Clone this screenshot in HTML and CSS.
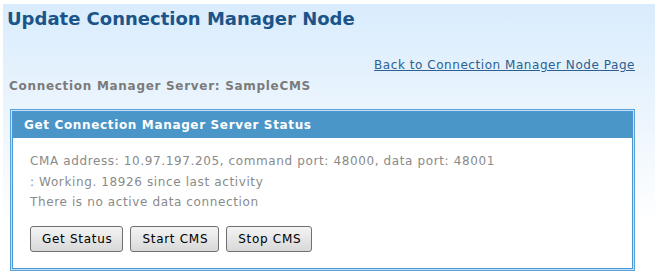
FILE: index.html
```html
<!DOCTYPE html>
<html lang="en">
<head>
  <meta charset="UTF-8">
  <title>Update Connection Manager Node</title>
  <link rel="stylesheet" href="styles.css">
</head>
<body>
  <div class="page">
    <h1 class="title">Update Connection Manager Node</h1>
    <div class="back-row">
      <a href="#" class="back-link">Back to Connection Manager Node Page</a>
    </div>
    <div class="server-name">Connection Manager Server: SampleCMS</div>
    <div class="group">
      <div class="group-inner">
        <div class="group-head">Get Connection Manager Server Status</div>
        <div class="group-body">
          <div class="status-line">CMA address: 10.97.197.205, command port: 48000, data port: 48001</div>
          <div class="status-line">: Working. 18926 since last activity</div>
          <div class="status-line">There is no active data connection</div>
          <div class="actions">
            <button>Get Status</button>
            <button>Start CMS</button>
            <button>Stop CMS</button>
          </div>
        </div>
      </div>
    </div>
  </div>
</body>
</html>
```
FILE: styles.css
```css
body { margin: 0; padding: 4px 5px 0 3px; background: #fff; font-family: "DejaVu Sans", Verdana, sans-serif; }
.page { height: 274px; padding: 0 20px 0 4px; background: linear-gradient(#d9ecfd, #eef6fd 45%, #ffffff 80%); }
.title { margin: 0; padding-top: 3px; font-size: 18px; line-height: 24px; font-weight: bold; color: #1b5488; }
.back-row { text-align: right; margin-top: 26px; font-size: 12px; line-height: 16px; letter-spacing: 0.55px; }
.back-link { color: #2b5f91; text-decoration: underline; }
.server-name { margin-top: 5px; padding-left: 2px; font-size: 12px; line-height: 16px; font-weight: bold; color: #7b7b7b; letter-spacing: 0.7px; }
.group { margin: 15px 0 0 3px; border: 1px solid #5aa2da; padding: 1px; background: #c6e0f5; }
.group-inner { border: 1px solid #4a98d6; background: #fff; }
.group-head { background: #4a96c8; color: #fff; font-weight: bold; font-size: 12px; line-height: 26px; padding-left: 11px; letter-spacing: 0.65px; }
.group-body { padding: 13px 16px 16px 17px; }
.status-line { color: #8a8a8a; font-size: 12px; line-height: 20.5px; letter-spacing: 0.62px; }
.actions { display: flex; gap: 7px; margin-top: 13px; }
.actions button { font-family: inherit; font-size: 12px; letter-spacing: 0.7px; height: 26px; padding: 0 10px 0 11px; border: 1px solid #707070; border-radius: 3px; background: linear-gradient(#f4f4f4, #e6e6e6 50%, #d8d8d8); color: #000; }
```
